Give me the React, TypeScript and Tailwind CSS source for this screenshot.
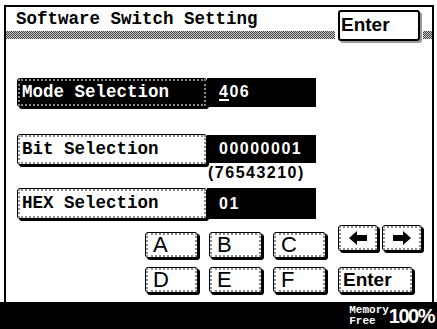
import type { ReactNode } from "react";

const mono = "font-['Liberation_Mono','DejaVu_Sans_Mono',monospace]";
const sans = "font-['Liberation_Sans',Arial,sans-serif]";
const hatch =
  "bg-[#888] bg-[image:repeating-conic-gradient(#444_0_25%,#c8c8c8_0_50%)] bg-[length:2px_2px]";

function Key({
  className = "",
  dark = false,
  children,
}: {
  className?: string;
  dark?: boolean;
  children?: ReactNode;
}) {
  return (
    <div
      className={`shrink-0 border border-black rounded-[3px] shadow-[2px_2px_0_#000] ${
        dark ? "bg-black text-white" : "bg-white text-black"
      } ${className}`}
    >
      <div className="h-full border-2 border-dotted border-[#8c8c8c] rounded-[2px] flex items-center">
        {children}
      </div>
    </div>
  );
}

function Arrow({ right = false }: { right?: boolean }) {
  return (
    <svg
      width="18"
      height="14"
      viewBox="0 0 18 14"
      className={right ? "rotate-180" : ""}
    >
      <polygon points="0,7 8,0 8,4 18,4 18,10 8,10 8,14" fill="#000" />
    </svg>
  );
}

export default function App() {
  const letters = ["A", "B", "C", "D", "E", "F"];

  return (
    <div className="w-[437px] h-[329px] bg-white flex flex-col overflow-hidden text-black">
      {/* frame */}
      <div className="flex-1 mt-[5px] ml-[4px] mr-[3px] border-2 border-b-0 border-black flex flex-col">
        {/* header */}
        <div className="flex items-start h-[34px]">
          <div className="flex-1 flex flex-col">
            <div
              className={`h-[24px] pl-[10px] pt-[2px] text-[17.5px] leading-[20px] font-bold ${mono}`}
            >
              Software Switch Setting
            </div>
            <div className={`h-[8px] ${hatch}`} />
          </div>
          <div
            className={`ml-[3px] mr-[3px] mt-[3px] w-[82px] h-[31px] border-2 border-black rounded-[3px] shadow-[2px_2px_0_#9a9a9a] flex items-center pl-[1px] text-[19px] font-bold ${sans}`}
          >
            Enter
          </div>
          <div className="w-[9px] pt-[24px]">
            <div className={`h-[8px] ${hatch}`} />
          </div>
        </div>

        {/* settings */}
        <div className="pl-[11px] flex flex-col">
          <div className="mt-[37px] flex items-start">
            <Key dark className="w-[190px] h-[29px]">
              <span className={`pl-[2px] text-[17.5px] font-bold ${mono}`}>
                Mode Selection
              </span>
            </Key>
            <div
              className={`w-[109px] h-[29px] bg-black text-white flex items-center pl-[12px] text-[16px] font-bold tracking-[1.5px] ${sans}`}
            >
              <span className="border-b-2 border-white leading-[15px]">4</span>
              <span className="leading-[15px] pb-[2px]">06</span>
            </div>
          </div>

          <div className="mt-[27px] flex items-start">
            <Key className="w-[190px] h-[31px]">
              <span className={`pl-[2px] text-[17.5px] font-bold ${mono}`}>
                Bit Selection
              </span>
            </Key>
            <div className="flex flex-col">
              <div
                className={`mt-[1px] w-[109px] h-[28px] bg-black text-white flex items-center pl-[12px] text-[16px] font-bold tracking-[1.5px] ${sans}`}
              >
                00000001
              </div>
              <div
                className={`h-[20px] leading-[20px] pl-[1px] text-[16px] font-bold tracking-[1.5px] ${sans}`}
              >
                (76543210)
              </div>
            </div>
          </div>

          <div className="mt-[5px] flex items-start">
            <Key className="w-[190px] h-[31px]">
              <span className={`pl-[2px] text-[17.5px] font-bold ${mono}`}>
                HEX Selection
              </span>
            </Key>
            <div
              className={`w-[109px] h-[31px] bg-black text-white flex items-center pl-[12px] text-[16px] font-bold tracking-[1.5px] ${sans}`}
            >
              01
            </div>
          </div>

          {/* keypad */}
          <div className="mt-[6px] ml-[128px] flex items-start">
            <div className="mt-[7px] grid grid-cols-[53px_53px_53px] gap-x-[11px] gap-y-[9px]">
              {letters.map((l) => (
                <Key key={l} className="h-[26px]">
                  <span className={`pl-[5px] text-[22px] leading-none ${sans}`}>
                    {l}
                  </span>
                </Key>
              ))}
            </div>
            <div className="ml-[12px] flex flex-col">
              <div className="flex gap-[4px]">
                <Key className="w-[40px] h-[26px]">
                  <div className="w-full flex justify-center">
                    <Arrow />
                  </div>
                </Key>
                <Key className="w-[40px] h-[26px]">
                  <div className="w-full flex justify-center">
                    <Arrow right />
                  </div>
                </Key>
              </div>
              <Key className="mt-[16px] w-[75px] h-[26px]">
                <span className={`pl-[2px] text-[19px] font-bold ${sans}`}>
                  Enter
                </span>
              </Key>
            </div>
          </div>
        </div>
      </div>

      {/* status bar */}
      <div className="h-[27px] bg-black text-white flex items-center justify-end pr-[3px]">
        <div
          className={`flex flex-col text-[11px] leading-[11px] font-bold ${mono}`}
        >
          <span>Memory</span>
          <span>Free</span>
        </div>
        <span
          className={`text-[20px] font-bold tracking-[-1.5px] leading-none ${sans}`}
        >
          100%
        </span>
      </div>
    </div>
  );
}
